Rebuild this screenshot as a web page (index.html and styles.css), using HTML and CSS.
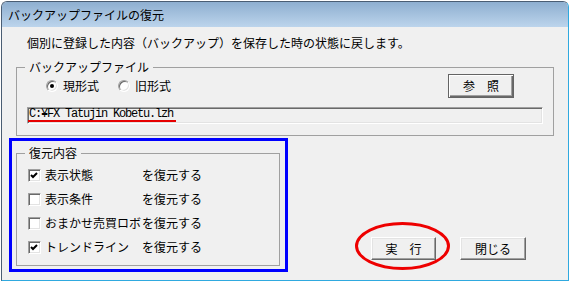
FILE: index.html
```html
<!DOCTYPE html>
<html lang="ja">
<head>
  <meta charset="UTF-8">
  <title>バックアップファイルの復元</title>
  <link rel="stylesheet" href="styles.css">
</head>
<body>
  <div class="window">
    <div class="titlebar">バックアップファイルの復元</div>
    <div class="content">
      <p class="desc">個別に登録した内容（バックアップ）を保存した時の状態に戻します。</p>

      <div class="group file-group">
        <div class="group-title">バックアップファイル</div>
        <div class="format-row">
          <label class="radio"><span class="radio-mark checked"></span>現形式</label>
          <label class="radio"><span class="radio-mark"></span>旧形式</label>
          <button class="btn btn-default">参　照</button>
        </div>
        <div class="path-field"><span class="path">C:¥FX Tatujin Kobetu.lzh</span></div>
      </div>

      <div class="bottom-row">
        <div class="group restore-group">
          <div class="group-title">復元内容</div>
          <label class="check-row">
            <span class="check"><svg width="9" height="9" viewBox="0 0 9 9"><polyline points="1,4 3,6 7,2" fill="none" stroke="#000" stroke-width="2"/></svg></span>
            <span class="item">表示状態</span>を復元する
          </label>
          <label class="check-row">
            <span class="check"></span>
            <span class="item">表示条件</span>を復元する
          </label>
          <label class="check-row">
            <span class="check"></span>
            <span class="item">おまかせ売買ロボ</span>を復元する
          </label>
          <label class="check-row">
            <span class="check"><svg width="9" height="9" viewBox="0 0 9 9"><polyline points="1,4 3,6 7,2" fill="none" stroke="#000" stroke-width="2"/></svg></span>
            <span class="item">トレンドライン</span>を復元する
          </label>
        </div>
        <div class="actions">
          <button class="btn btn-run">実　行</button>
          <button class="btn btn-close">閉じる</button>
        </div>
      </div>
    </div>

    <!-- annotations drawn over the dialog -->
    <div class="mark-blue"></div>
    <div class="mark-red"></div>
  </div>
</body>
</html>
```

FILE: styles.css
```css
* {
  box-sizing: border-box;
}
body {
  margin: 0;
  background: #ffffff;
  font-family: "Noto Sans CJK JP", sans-serif;
  font-size: 12px;
  color: #000000;
}
.window {
  position: relative;
  margin: 1px 0 0 1px;
  width: 568px;
  height: 280px;
  border: 1px solid #4a5d73;
  border-right-color: #2fa9df;
  border-bottom-color: #2fa9df;
  border-radius: 6px 6px 0 0;
  background: #f0f0f0;
}
.titlebar {
  height: 25px;
  line-height: 25px;
  padding-left: 6px;
  background: linear-gradient(#8eafd0, #bcd4ec);
  border-radius: 5px 5px 0 0;
}
.desc {
  margin: 0;
  padding: 8px 0 0 25px;
  line-height: 16px;
}

/* group boxes */
.group {
  border: 1px solid #a0a0a0;
}
.group-title {
  width: fit-content;
  margin: -9px 0 0 8px;
  padding: 0 4px;
  background: #f0f0f0;
  line-height: 16px;
}
.file-group {
  margin: 16px 14px 0 14px;
  padding-bottom: 11px;
}
.file-group .group-title {
  margin-bottom: -1px;
}
.format-row {
  display: flex;
  align-items: center;
  height: 24px;
  padding-left: 29px;
}
.radio {
  display: flex;
  align-items: center;
  gap: 5px;
  line-height: 16px;
}
.radio + .radio {
  margin-left: 19px;
}
.radio-mark {
  position: relative;
  width: 12px;
  height: 12px;
  border-radius: 50%;
  border: 1px solid;
  border-color: #a0a0a0 #ffffff #ffffff #a0a0a0;
  background: #ffffff;
  box-shadow: inset 1px 1px 0 #696969, inset -1px -1px 0 #e3e3e3;
}
.radio-mark.checked::after {
  content: "";
  position: absolute;
  left: 3px;
  top: 3px;
  width: 4px;
  height: 4px;
  border-radius: 50%;
  background: #000000;
}

/* buttons */
.btn {
  font: inherit;
  color: #000000;
  background: #f0f0f0;
  padding: 0;
  line-height: 16px;
  border: 1px solid;
  border-color: #ffffff #696969 #696969 #ffffff;
  box-shadow: inset -1px -1px 0 #a0a0a0, inset 1px 1px 0 #e3e3e3;
}
.btn-default {
  margin-left: auto;
  margin-right: 39px;
  width: 66px;
  height: 24px;
  border-color: #646464;
  box-shadow: inset 1px 1px 0 #ffffff, inset -1px -1px 0 #696969, inset -2px -2px 0 #a0a0a0;
}
.path-field {
  display: flex;
  align-items: flex-start;
  margin: 9px 10px 0 10px;
  height: 17px;
  border: 1px solid;
  border-color: #a0a0a0 #ffffff #ffffff #a0a0a0;
  box-shadow: inset 1px 1px 0 #696969, inset -1px -1px 0 #e3e3e3;
}
.path {
  display: inline-block;
  padding: 0 3px 0 1px;
  font-family: "Liberation Mono", monospace;
  font-size: 12px;
  letter-spacing: -1.2px;
  line-height: 12px;
  white-space: pre;
  border-bottom: 2px solid #e60000;
}

/* restore options */
.bottom-row {
  display: flex;
  align-items: flex-end;
  margin-top: 17px;
}
.restore-group {
  margin-left: 14px;
  width: 264px;
  padding-bottom: 6px;
}
.restore-group .group-title {
  margin-bottom: 2px;
}
.check-row {
  display: flex;
  align-items: center;
  height: 24px;
  padding-left: 11px;
  line-height: 16px;
}
.check {
  display: flex;
  align-items: center;
  justify-content: center;
  width: 13px;
  height: 13px;
  margin-right: 4px;
  border: 1px solid;
  border-color: #a0a0a0 #ffffff #ffffff #a0a0a0;
  background: #ffffff;
  box-shadow: inset 1px 1px 0 #696969, inset -1px -1px 0 #e3e3e3;
}
.item {
  width: 97px;
}
.actions {
  display: flex;
  gap: 24px;
  margin: 0 42px 6px auto;
}
.actions .btn {
  height: 23px;
}
.btn-run {
  width: 65px;
}
.btn-close {
  width: 66px;
}

/* annotation marks */
.mark-blue {
  position: absolute;
  left: 7px;
  top: 136px;
  width: 279px;
  height: 134px;
  border: 3px solid #0000ff;
  pointer-events: none;
}
.mark-red {
  position: absolute;
  left: 353px;
  top: 220px;
  width: 95px;
  height: 48px;
  border: 3px solid #ee0000;
  border-radius: 50%;
  pointer-events: none;
}
```
